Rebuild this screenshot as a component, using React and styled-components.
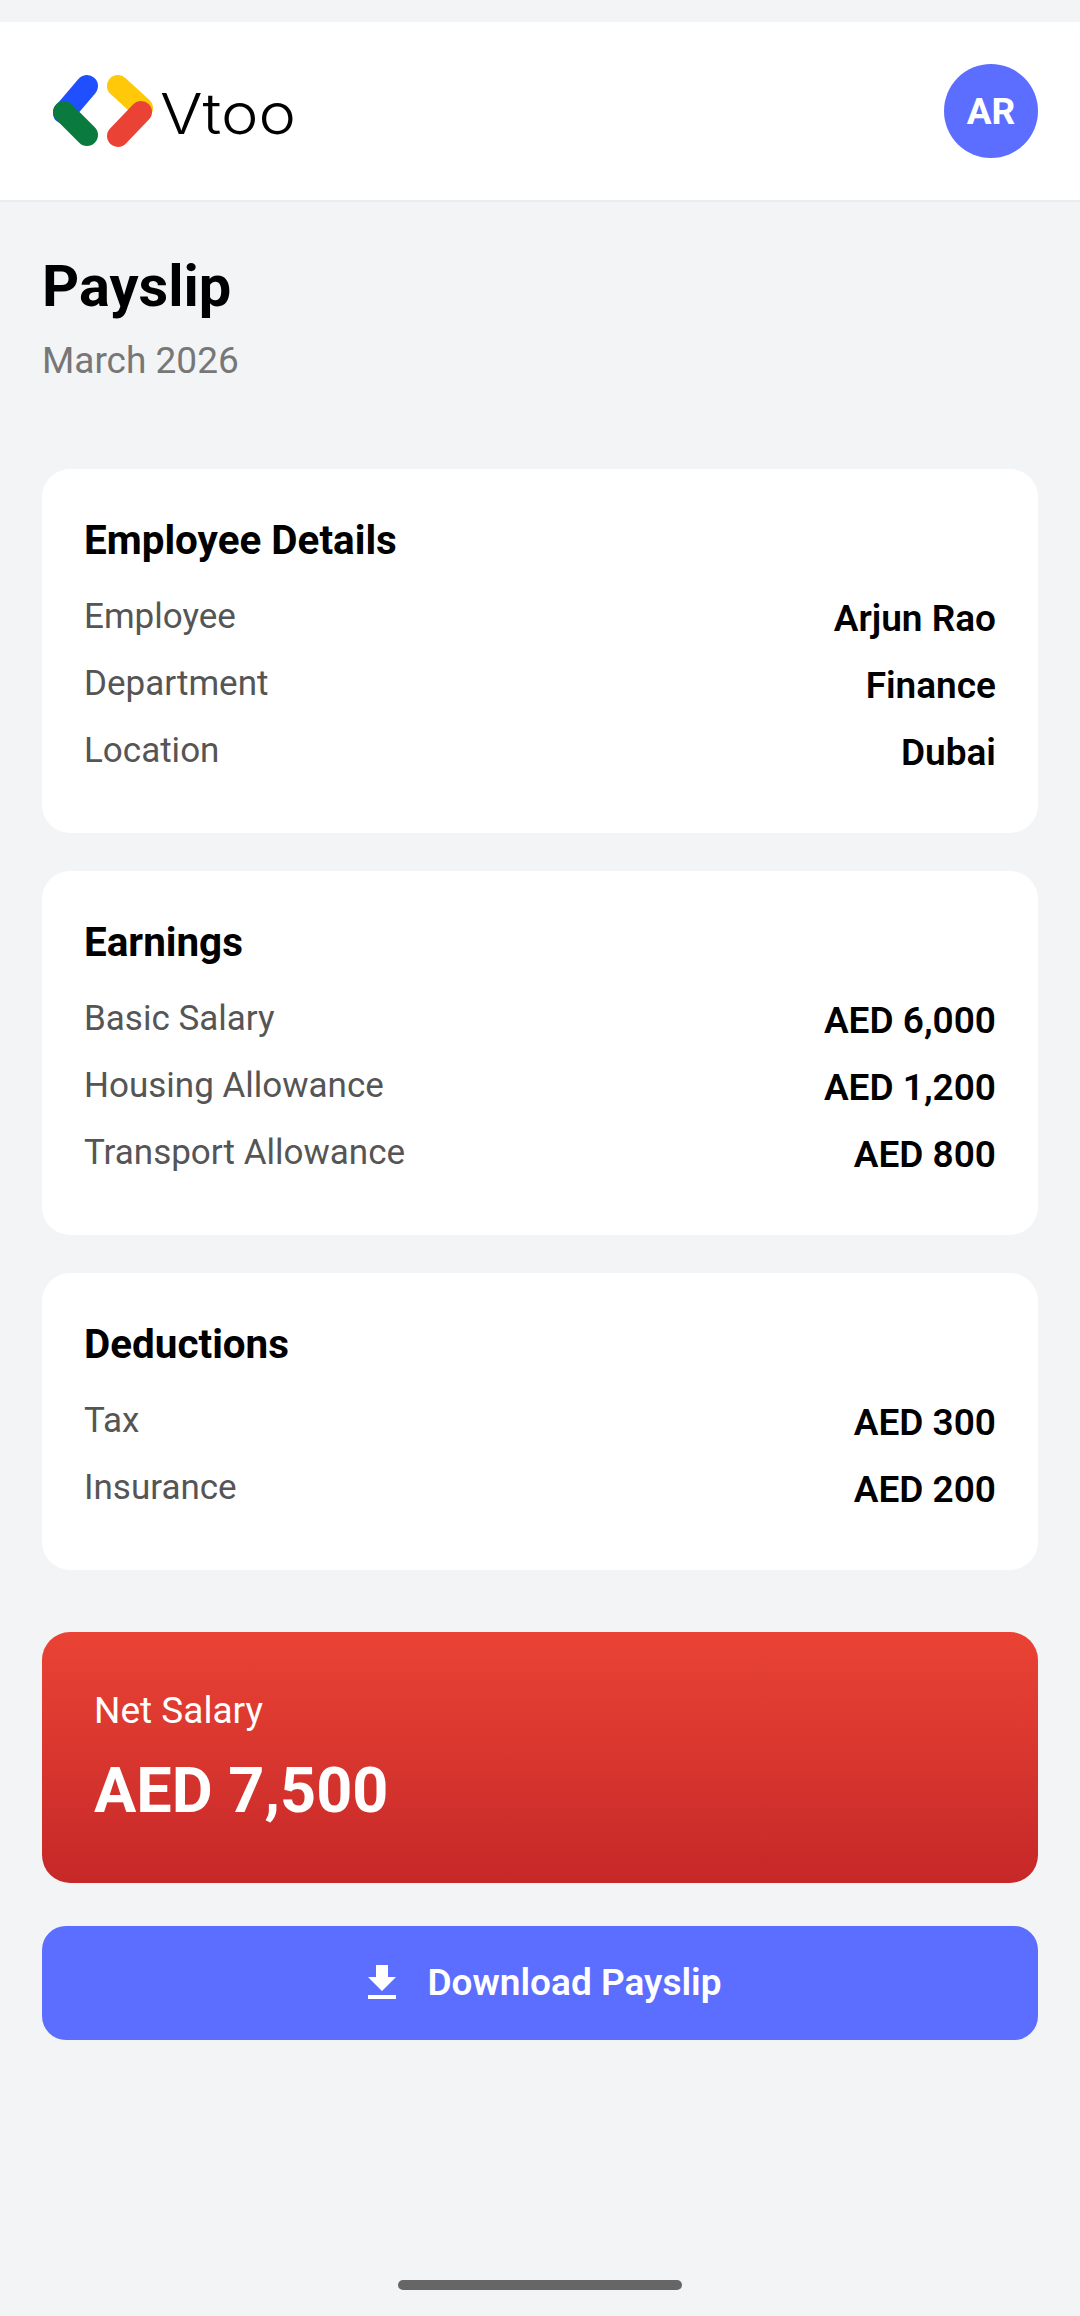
import React from "react";
import styled, { createGlobalStyle } from "styled-components";

const Global = createGlobalStyle`
  html, body { margin: 0; padding: 0; background: #f3f4f6; }
  * { box-sizing: border-box; }
  body { font-family: Roboto, "Liberation Sans", sans-serif; -webkit-font-smoothing: antialiased; }
`;

const Screen = styled.div`
  width: 1080px;
  height: 2316px;
  padding-top: 22px;
  display: flex;
  flex-direction: column;
  background: #f3f4f6;
  overflow: hidden;
`;

const Header = styled.header`
  height: 180px;
  flex: none;
  background: #fff;
  border-bottom: 2px solid #ececee;
  padding: 0 42px 0 41px;
  display: flex;
  align-items: center;
  justify-content: space-between;
`;

const Brand = styled.div`
  display: flex;
  align-items: center;
  gap: 1px;
`;

const Wordmark = styled.span`
  display: inline-block;
  font-family: Inter, "Open Sans", sans-serif;
  font-weight: 300;
  font-size: 56px;
  line-height: 60px;
  color: #000;
  transform: translateY(3px) scaleX(1.13);
  transform-origin: left center;
`;

const Avatar = styled.div`
  width: 94px;
  height: 94px;
  border-radius: 50%;
  background: #5c6eff;
  color: #fff;
  display: flex;
  align-items: center;
  justify-content: center;
  font-weight: 700;
  font-size: 37px;
`;

const Main = styled.main`
  flex: 1;
  padding: 0 42px;
  display: flex;
  flex-direction: column;
`;

const Title = styled.h1`
  margin: 52px 0 0;
  font-size: 57.75px;
  line-height: 64px;
  font-weight: 700;
  color: #000;
`;

const Subtitle = styled.p`
  margin: 21px 0 0;
  font-size: 37px;
  line-height: 44px;
  font-weight: 400;
  color: #777;
`;

const Cards = styled.div`
  margin-top: 86px;
  display: flex;
  flex-direction: column;
  gap: 37.5px;
`;

const Card = styled.section`
  background: #fff;
  border-radius: 28px;
  padding: 42px 42px 36.25px;
`;

const CardTitle = styled.h2`
  margin: 0 0 25px;
  font-size: 40.4px;
  line-height: 60px;
  font-weight: 700;
  color: #000;
`;

const Row = styled.div`
  display: flex;
  justify-content: space-between;
  align-items: flex-start;
  height: 67px;
`;

const Label = styled.span`
  font-size: 35px;
  line-height: 42px;
  color: #555;
`;

const Value = styled.span`
  font-size: 37px;
  line-height: 46px;
  font-weight: 600;
  color: #000;
`;

const NetCard = styled.section`
  margin-top: 61.75px;
  height: 251px;
  border-radius: 28px;
  padding: 57px 52px 0;
  background: linear-gradient(180deg, #ea4335, #c62828);
  color: #fff;
`;

const NetLabel = styled.div`
  font-size: 37px;
  line-height: 44px;
`;

const NetAmount = styled.div`
  margin-top: 20px;
  font-size: 63px;
  line-height: 76px;
  font-weight: 700;
`;

const DownloadButton = styled.button`
  margin-top: 43px;
  height: 114px;
  border: 0;
  border-radius: 24px;
  background: #5c6eff;
  color: #fff;
  font-family: inherit;
  font-size: 37px;
  font-weight: 600;
  display: flex;
  align-items: center;
  justify-content: center;
  gap: 21px;
`;

const HomeBarWrap = styled.div`
  flex: none;
  height: 62px;
  display: flex;
  justify-content: center;
  padding-top: 26px;
`;

const HomeBar = styled.div`
  width: 284px;
  height: 10px;
  border-radius: 5px;
  background: #666;
`;

const Logo = () => (
  <svg width="118" height="90" viewBox="0 0 118 90" fill="none" strokeLinecap="round" strokeWidth="22">
    <path d="M46 20 L23 47" stroke="#1f4fff" />
    <path d="M23 46 L46 69" stroke="#0a7a3f" />
    <path d="M77 20 L101 42" stroke="#ffc808" />
    <path d="M100 46 L77 70" stroke="#ea4335" />
  </svg>
);

const DownloadIcon = () => (
  <svg width="48" height="48" viewBox="0 0 24 24" fill="#fff">
    <path d="M19 9h-4V3H9v6H5l7 7 7-7zM5 18v2h14v-2H5z" />
  </svg>
);

const sections = [
  { title: "Employee Details", rows: [["Employee", "Arjun Rao"], ["Department", "Finance"], ["Location", "Dubai"]] },
  { title: "Earnings", rows: [["Basic Salary", "AED 6,000"], ["Housing Allowance", "AED 1,200"], ["Transport Allowance", "AED 800"]] },
  { title: "Deductions", rows: [["Tax", "AED 300"], ["Insurance", "AED 200"]] },
];

export default function App() {
  return (
    <Screen>
      <Global />
      <Header>
        <Brand>
          <Logo />
          <Wordmark>Vtoo</Wordmark>
        </Brand>
        <Avatar>AR</Avatar>
      </Header>
      <Main>
        <Title>Payslip</Title>
        <Subtitle>March 2026</Subtitle>
        <Cards>
          {sections.map((s) => (
            <Card key={s.title}>
              <CardTitle>{s.title}</CardTitle>
              {s.rows.map(([l, v]) => (
                <Row key={l}>
                  <Label>{l}</Label>
                  <Value>{v}</Value>
                </Row>
              ))}
            </Card>
          ))}
        </Cards>
        <NetCard>
          <NetLabel>Net Salary</NetLabel>
          <NetAmount>AED 7,500</NetAmount>
        </NetCard>
        <DownloadButton>
          <DownloadIcon />
          Download Payslip
        </DownloadButton>
      </Main>
      <HomeBarWrap>
        <HomeBar />
      </HomeBarWrap>
    </Screen>
  );
}
